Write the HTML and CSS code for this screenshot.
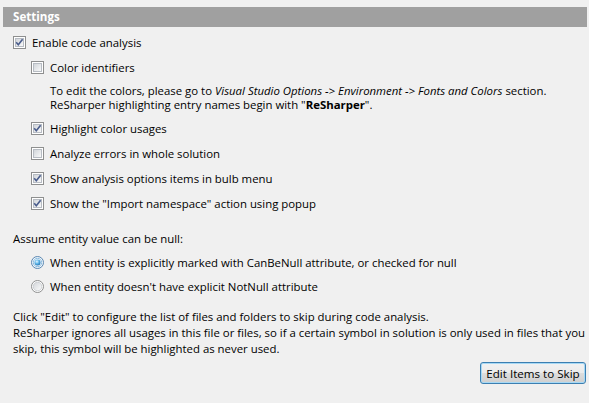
FILE: index.html
```html
<!DOCTYPE html>
<html>
<head>
<meta charset="utf-8">
<link rel="stylesheet" href="styles.css">
</head>
<body>
<div class="page">
  <div class="header">Settings</div>
  <div class="content">
    <div class="row">
      <svg class="cb" viewBox="0 0 13 13" width="13" height="13"><defs><linearGradient id="g1" x1="0" y1="0" x2="1" y2="1"><stop offset="0" stop-color="#cfd3d8"/><stop offset="1" stop-color="#fbfbfb"/></linearGradient></defs><rect x="0.5" y="0.5" width="12" height="12" fill="#fff" stroke="#8e8f8f"/><rect x="2.5" y="2.5" width="8" height="8" fill="url(#g1)" stroke="#b7bcc3"/><path d="M3.2 6.3 L5.3 8.8 L9.6 3.2" fill="none" stroke="#4a5d8c" stroke-width="1.6"/></svg>
      <span>Enable code analysis</span>
    </div>
    <div class="sub">
      <div class="row">
        <svg class="cb" viewBox="0 0 13 13" width="13" height="13"><rect x="0.5" y="0.5" width="12" height="12" fill="#fff" stroke="#8e8f8f"/><rect x="2.5" y="2.5" width="8" height="8" fill="url(#g1)" stroke="#b7bcc3"/></svg>
        <span>Color identifiers</span>
      </div>
      <p class="desc">To edit the colors, please go to <i>Visual Studio Options -&gt; Environment -&gt; Fonts and Colors</i> section.<br>ReSharper highlighting entry names begin with "<b>ReSharper</b>".</p>
      <div class="row">
        <svg class="cb" viewBox="0 0 13 13" width="13" height="13"><rect x="0.5" y="0.5" width="12" height="12" fill="#fff" stroke="#8e8f8f"/><rect x="2.5" y="2.5" width="8" height="8" fill="url(#g1)" stroke="#b7bcc3"/><path d="M3.2 6.3 L5.3 8.8 L9.6 3.2" fill="none" stroke="#4a5d8c" stroke-width="1.6"/></svg>
        <span>Highlight color usages</span>
      </div>
      <div class="row">
        <svg class="cb" viewBox="0 0 13 13" width="13" height="13"><rect x="0.5" y="0.5" width="12" height="12" fill="#fff" stroke="#8e8f8f"/><rect x="2.5" y="2.5" width="8" height="8" fill="url(#g1)" stroke="#b7bcc3"/></svg>
        <span>Analyze errors in whole solution</span>
      </div>
      <div class="row">
        <svg class="cb" viewBox="0 0 13 13" width="13" height="13"><rect x="0.5" y="0.5" width="12" height="12" fill="#fff" stroke="#8e8f8f"/><rect x="2.5" y="2.5" width="8" height="8" fill="url(#g1)" stroke="#b7bcc3"/><path d="M3.2 6.3 L5.3 8.8 L9.6 3.2" fill="none" stroke="#4a5d8c" stroke-width="1.6"/></svg>
        <span>Show analysis options items in bulb menu</span>
      </div>
      <div class="row">
        <svg class="cb" viewBox="0 0 13 13" width="13" height="13"><rect x="0.5" y="0.5" width="12" height="12" fill="#fff" stroke="#8e8f8f"/><rect x="2.5" y="2.5" width="8" height="8" fill="url(#g1)" stroke="#b7bcc3"/><path d="M3.2 6.3 L5.3 8.8 L9.6 3.2" fill="none" stroke="#4a5d8c" stroke-width="1.6"/></svg>
        <span>Show the "Import namespace" action using popup</span>
      </div>
    </div>
    <p class="label">Assume entity value can be null:</p>
    <div class="sub">
      <div class="rrow">
        <svg class="rb" viewBox="0 0 13 13" width="13" height="13"><defs><radialGradient id="rg" cx="0.4" cy="0.35" r="0.7"><stop offset="0" stop-color="#e6f6ff"/><stop offset="0.5" stop-color="#5fb6e8"/><stop offset="1" stop-color="#1f6fb0"/></radialGradient></defs><circle cx="6.5" cy="6.5" r="6" fill="#eef6fb" stroke="#5a86b0"/><circle cx="6.5" cy="6.5" r="4.2" fill="none" stroke="#8fbde0" stroke-width="1"/><circle cx="6.5" cy="6.5" r="3" fill="url(#rg)"/></svg>
        <span>When entity is explicitly marked with CanBeNull attribute, or checked for null</span>
      </div>
      <div class="rrow">
        <svg class="rb" viewBox="0 0 13 13" width="13" height="13"><defs><linearGradient id="rg2" x1="0" y1="0" x2="1" y2="1"><stop offset="0" stop-color="#d2d5d9"/><stop offset="1" stop-color="#fcfcfc"/></linearGradient></defs><circle cx="6.5" cy="6.5" r="6" fill="#fff" stroke="#8e8f8f"/><circle cx="6.5" cy="6.5" r="4.3" fill="url(#rg2)" stroke="#c3c6ca" stroke-width="0.8"/></svg>
        <span>When entity doesn't have explicit NotNull attribute</span>
      </div>
    </div>
    <p class="note">Click "Edit" to configure the list of files and folders to skip during code analysis.<br>ReSharper ignores all usages in this file or files, so if a certain symbol in solution is only used in files that you<br>skip, this symbol will be highlighted as never used.</p>
    <div class="actions">
      <button class="btn" type="button">Edit Items to Skip</button>
    </div>
  </div>
</div>
</body>
</html>
```
FILE: styles.css
```css
html, body {
  margin: 0;
  padding: 0;
  background: #f0f0f0;
}
body {
  font-family: "Open Sans", "Noto Sans", sans-serif;
  font-size: 11.4px;
  color: #000;
  width: 589px;
  height: 403px;
  overflow: hidden;
}
.page {
  padding-top: 7px;
}
.header {
  margin: 0 2px 0 3px;
  height: 20px;
  line-height: 20px;
  background: #a0a0a0;
  color: #fff;
  font-weight: bold;
  font-size: 11.6px;
  padding-left: 10px;
}
.content {
  padding: 3px 3px 0 13px;
}
.row, .rrow {
  display: flex;
  align-items: center;
  height: 25px;
  white-space: nowrap;
}
.rrow {
  height: 24px;
}
.cb, .rb {
  flex: none;
  margin-right: 6px;
}
.sub {
  padding-left: 18px;
}
.desc {
  margin: 4px 0 4px 19px;
  line-height: 14px;
  white-space: nowrap;
}
.label {
  margin: 16px 0 4px 0;
  line-height: 14px;
}
.note {
  margin: 11px 0 0 0;
  line-height: 16px;
  white-space: nowrap;
}
.actions {
  display: flex;
  justify-content: flex-end;
  margin-top: 5px;
}
.btn {
  font-family: inherit;
  font-size: 11.6px;
  color: #000;
  height: 22px;
  width: 106px;
  padding: 0;
  border: 1px solid #3c7fb1;
  border-radius: 3px;
  background: linear-gradient(#f2f2f2 0%, #ebebeb 50%, #dddddd 51%, #cfcfcf 100%);
  box-shadow: inset 0 0 0 1px #a7d9f5;
}
```
